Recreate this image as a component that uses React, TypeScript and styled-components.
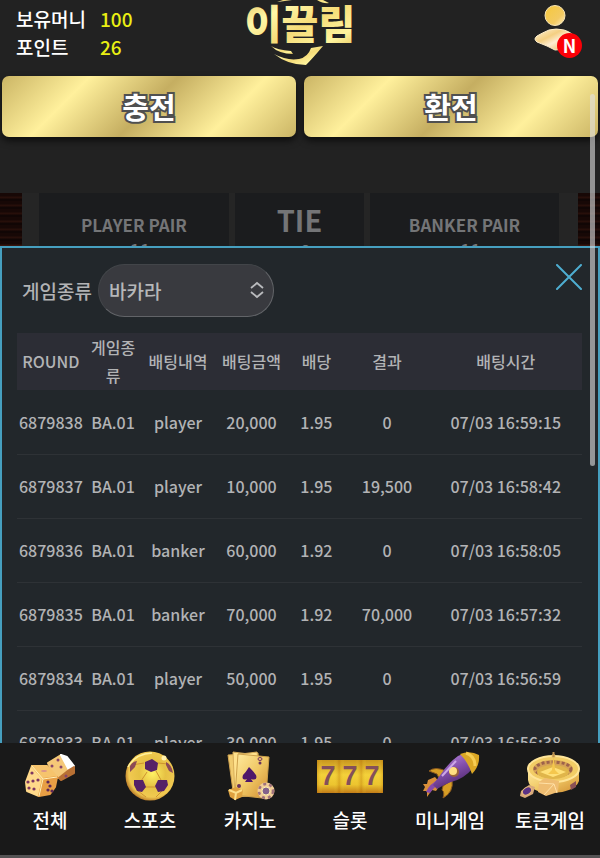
import React from "react";
import styled, { createGlobalStyle } from "styled-components";

const GlobalStyle = createGlobalStyle`
  *, *::before, *::after { box-sizing: border-box; }
  body {
    margin: 0;
    background: #222222;
    font-family: "Noto Sans CJK KR", "Noto Sans", sans-serif;
    font-weight: 500;
  }
  button, select { font-family: inherit; font-weight: inherit; }
`;

const Page = styled.div`
  position: relative;
  display: flex;
  flex-direction: column;
  height: 100vh;
  overflow: hidden;
  background: #222222;
`;

const Header = styled.header`
  display: grid;
  grid-template-columns: 1fr auto 1fr;
  align-items: start;
  height: 76px;
  flex: none;
`;

const Balance = styled.dl`
  display: grid;
  grid-template-columns: 84px 1fr;
  margin: 0;
  padding: 5px 0 0 16px;
  font-size: 19px;
  line-height: 28px;
  color: #ffffff;
  dt, dd { margin: 0; }
  dd { color: #e9ef13; }
`;

const LogoLink = styled.a`
  display: block;
  svg { display: block; }
`;

const ProfileButton = styled.button`
  position: relative;
  justify-self: end;
  margin: 4px 18px 0 0;
  padding: 0;
  border: 0;
  width: 48px;
  height: 54px;
  background: none;
  svg { display: block; }
`;

const NewBadge = styled.span`
  position: absolute;
  right: 0;
  top: 29px;
  width: 25px;
  height: 25px;
  border-radius: 50%;
  background: #fb0007;
  color: #ffffff;
  font-size: 18px;
  font-weight: 700;
  line-height: 24px;
  text-align: center;
`;

const WalletActions = styled.div`
  display: grid;
  grid-template-columns: 1fr 1fr;
  gap: 8px;
  padding: 0 2px;
  flex: none;
`;

const GoldButton = styled.button`
  height: 61px;
  border: 0;
  border-radius: 7px;
  padding: 0 0 2px;
  background: linear-gradient(135deg, #cbb565 0%, #fff09c 25%, #c5ae61 50%, #fff09c 75%, #cbb565 100%);
  box-shadow: 0 4px 7px rgba(0, 0, 0, 0.6);
  color: #ffffff;
  font-size: 29px;
  font-weight: 700;
  line-height: 40px;
  -webkit-text-stroke: 4px #505050;
  paint-order: stroke fill;
`;

const Board = styled.section`
  display: grid;
  grid-template-columns: 22px 1fr 22px;
  gap: 17px;
  height: 53px;
  margin-top: 56px;
  flex: none;
  overflow: hidden;
  background: #252525;
`;

const BoardBackdrop = styled.div`
  background:
    linear-gradient(180deg, transparent 74%, #481810 78%, #280e0a 84%, #53201a 88%, #1a0907 94%),
    repeating-linear-gradient(180deg, #170806 0 3px, #270f0a 4px 5px, #110605 6px 8px);
`;

const BetSpots = styled.div`
  display: grid;
  grid-template-columns: 190fr 129fr 189fr;
  gap: 6px;
  padding-right: 2px;
`;

const BetSpot = styled.div<{ $large?: boolean }>`
  display: flex;
  flex-direction: column;
  align-items: center;
  padding-top: ${(p) => (p.$large ? 7 : 19)}px;
  background: #1b1c1e;
  color: #747577;
  font-size: 18px;
  line-height: 24px;
  white-space: nowrap;
  strong {
    font-size: ${(p) => (p.$large ? 29 : 17)}px;
    font-weight: 700;
    line-height: ${(p) => (p.$large ? 38 : 25)}px;
  }
  span { padding-left: 12px; }
`;

const HistoryPanel = styled.section`
  flex: 1;
  min-height: 0;
  overflow: hidden;
  border: 2px solid #469fbf;
  border-bottom: 0;
  padding: 16px 16px 0 15px;
  background: #22272b;
  color: #b2b3b5;
`;

const PanelBar = styled.div`
  display: flex;
  align-items: flex-start;
  justify-content: space-between;
`;

const Filter = styled.div`
  display: flex;
  align-items: center;
  gap: 6px;
  padding-left: 5px;
  font-size: 19px;
  line-height: 28px;
`;

const SelectBox = styled.div`
  position: relative;
  svg {
    position: absolute;
    right: 10px;
    top: 16px;
    pointer-events: none;
  }
`;

const GameSelect = styled.select`
  appearance: none;
  display: block;
  width: 176px;
  height: 53px;
  padding: 0 36px 0 10px;
  border: 1px solid #424549;
  border-right-color: #626468;
  border-bottom-color: #626468;
  border-radius: 27px;
  background: #393a3f;
  color: #b6b7b9;
  font-size: 19px;
  line-height: 28px;
`;

const CloseButton = styled.button`
  padding: 0;
  border: 0;
  background: none;
  svg { display: block; }
`;

const BetTable = styled.table`
  width: 100%;
  margin-top: 16px;
  table-layout: fixed;
  border-collapse: collapse;
  font-size: 16px;
  line-height: 28px;
  text-align: center;
  th {
    height: 57px;
    padding: 0 5px 1px;
    background: #2c2d35;
    font-weight: 500;
    word-break: break-all;
  }
  td {
    height: 64px;
    padding: 0;
    border-bottom: 1px solid #2e3236;
    white-space: nowrap;
  }
`;

const BottomNav = styled.nav`
  display: grid;
  grid-template-columns: repeat(6, 1fr);
  flex: none;
  height: 115px;
  border-bottom: 3px solid #555354;
  background: #191919;
`;

const NavItem = styled.a`
  display: flex;
  flex-direction: column;
  align-items: center;
  gap: 3px;
  padding-top: 6px;
  color: #ffffff;
  font-size: 19px;
  line-height: 28px;
  text-decoration: none;
  white-space: nowrap;
`;

const ScrollThumb = styled.div`
  position: absolute;
  right: 5px;
  top: 94px;
  width: 5px;
  height: 372px;
  border-radius: 3px;
  background: rgba(225, 225, 225, 0.6);
`;

const Logo = () => (
  <svg width="112" height="70" viewBox="0 0 112 70" role="img" aria-label="이끌림">
    <defs>
      <linearGradient id="logoGold" x1="0" y1="0" x2="1" y2="1">
        <stop offset="0" stopColor="#e3b852" />
        <stop offset=".3" stopColor="#fff7a8" />
        <stop offset=".55" stopColor="#f6dc78" />
        <stop offset=".8" stopColor="#fff59e" />
        <stop offset="1" stopColor="#e2bd55" />
      </linearGradient>
    </defs>
    <path d="M33 2 39 0H48Q41 1 33 2ZM73 0H79L85 3Q80 4 73 0Z" fill="url(#logoGold)" />
    <path d="M27 46Q33 50 47 51L49 54Q35 54 27 46Z" fill="url(#logoGold)" />
    <path d="M30 54Q43 61 55 59Q64 57 67 48L79 46Q69 58 62 65Q44 65 30 54Z" fill="url(#logoGold)" />
    <text x="56" y="39" textAnchor="middle" fontSize="40" fontWeight="900" fill="url(#logoGold)">이끌림</text>
  </svg>
);

const ProfileIcon = () => (
  <svg width="48" height="54" viewBox="0 0 48 54" aria-hidden="true">
    <defs>
      <linearGradient id="profileHead" x1="0" y1="0" x2="1" y2="1">
        <stop stopColor="#f6c83b" /><stop offset=".65" stopColor="#f3ca62" /><stop offset="1" stopColor="#fff0ca" />
      </linearGradient>
      <linearGradient id="profileBody" x1="0" y1="0" x2="1" y2="1">
        <stop stopColor="#fff5da" /><stop offset=".35" stopColor="#f4cf82" /><stop offset=".55" stopColor="#ffedd2" /><stop offset="1" stopColor="#e4a32f" />
      </linearGradient>
    </defs>
    <circle cx="21" cy="11.500" r="10" fill="url(#profileHead)" stroke="#f8e6b7" />
    <path d="M15 26Q22 24 30 26Q40 29 42 36Q37 46 21 46Q14 42 3 38Q-1 35 3 32Q8 29 15 26Z" fill="url(#profileBody)" stroke="#ffefcc" />
  </svg>
);

const CloseIcon = () => (
  <svg width="26" height="26" viewBox="0 0 26 26" aria-hidden="true">
    <path d="M1 1 25 25M25 1 1 25" stroke="#4eaed1" strokeWidth="2" strokeLinecap="round" />
  </svg>
);

const SelectArrows = () => (
  <svg width="14" height="20" viewBox="0 0 14 20" fill="none" aria-hidden="true">
    <path d="M1 8 7 3 13 8M1 12 7 17 13 12" stroke="#b9babd" strokeWidth="1.8" />
  </svg>
);

const NavSvg = ({ children }: { children: React.ReactNode }) => (
  <svg width="70" height="54" viewBox="0 0 70 54" aria-hidden="true">{children}</svg>
);

const GoldDefs = ({ id }: { id: string }) => (
  <defs>
    <linearGradient id={id} x1="0" y1="0" x2="1" y2="1">
      <stop stopColor="#ffeba0" /><stop offset=".5" stopColor="#f0c865" /><stop offset="1" stopColor="#d08c30" />
    </linearGradient>
  </defs>
);

const DiceIcon = () => (
  <NavSvg>
    <g strokeLinejoin="round" strokeWidth="2">
      <path d="M33 14 46 6 54 21 44 29 40 28Z" fill="#f5c878" stroke="#f5c878" />
      <path d="M46 6 52 8 59 17 54 21Z" fill="#ffffff" stroke="#ffffff" />
      <path d="M44 29 54 21 59 18V24L46 31Z" fill="#b87034" stroke="#b87034" />
      <path d="M17 17 11 33 12 42 24 47 28 30Z" fill="#ffd98a" stroke="#ffd98a" />
      <path d="M17 17 32 17 42 28 28 30Z" fill="#f6c46d" stroke="#f6c46d" />
      <path d="M28 30 42 28 40 38 35 45 24 47Z" fill="#e89f45" stroke="#e89f45" />
    </g>
    <path d="M17 17 28 30 24 47M28 30 42 28" stroke="#fff0b8" fill="none" />
    <g fill="#7d3661">
      <circle cx="17" cy="24" r="1.600" />
      <circle cx="23" cy="31" r="1.600" />
      <circle cx="13" cy="33" r="1.600" />
      <circle cx="18" cy="32" r="1.600" />
      <circle cx="14" cy="39" r="1.600" />
      <circle cx="19" cy="40" r="1.600" />
    </g>
    <g fill="#5e2856">
      <circle cx="33" cy="33" r="1.600" />
      <circle cx="35" cy="37" r="1.600" />
      <circle cx="33" cy="41" r="1.600" />
      <circle cx="37" cy="42" r="1.600" />
    </g>
    <g fill="#88456a">
      <ellipse cx="29" cy="22" rx="3" ry="1" fill="#d9928b" />
      <circle cx="37" cy="17" r="1.500" />
      <circle cx="43" cy="11" r="1.500" />
      <circle cx="46" cy="18" r="1.500" />
      <circle cx="51" cy="27" r="1.500" />
    </g>
  </NavSvg>
);

const BallIcon = () => (
  <NavSvg>
    <defs>
      <radialGradient id="ballGold" cx=".55" cy=".45" r=".6">
        <stop stopColor="#fff163" /><stop offset=".45" stopColor="#e6c144" /><stop offset=".8" stopColor="#f1c951" /><stop offset="1" stopColor="#a7611c" />
      </radialGradient>
    </defs>
    <circle cx="35" cy="27" r="24.500" fill="url(#ballGold)" />
    <path d="M29 14 17 16M43 14 53 15M32 23 26 32M41 22 46 31M23 42 31 48M47 42 41 48M29 38H43" stroke="#cf9330" strokeWidth="1" />
    <path d="M30 13 37 10 43 14 42 21 36 23 30 20ZM19 31 28 31 31 38 27 43 22 42 19 36ZM43 31 52 31 53 36 49 42 43 43 40 37Z" fill="#562267" />
    <path d="M15 17Q18 12 22 12L20 18 15 23ZM51 13Q57 16 58 24L54 22 51 16Z" fill="#8c4b55" />
    <path d="M13 18Q20 5 37 4" stroke="#fff19a" strokeWidth="1.500" fill="none" />
    <circle cx="49" cy="9" r="2.500" fill="#fff0ad" />
  </NavSvg>
);

const CardsIcon = () => (
  <NavSvg>
    <GoldDefs id="cardGold" />
    <path d="M13 6 43 4 45 42 19 49Z" fill="#f1cc70" stroke="#d3a551" />
    <path d="M18 3Q30 6 42 3L48 46 20 48Z" fill="#ffe28d" stroke="#d8ae5a" />
    <path d="M23 5 54 8 51 46 47 49 20 46Z" fill="url(#cardGold)" stroke="#cda04c" />
    <path d="M34 18Q39 23 41 26Q43 32 36 30L38 33H30L32 30Q26 32 28 26Q31 23 34 18Z" fill="#4e176a" />
    <ellipse cx="45" cy="10" rx="2" ry="1.500" fill="none" stroke="#76345f" />
    <circle cx="45" cy="14" r="1.500" fill="#68325c" />
    <circle cx="24" cy="37" r="2" fill="#68325c" />
    <path d="M13 41 21 38 28 41 27 48 20 51 15 48Z" fill="#dea13f" />
    <path d="m14 41 7 3 6-3M21 44l-1 7" stroke="#fce08b" strokeWidth="2" fill="none" />
    <circle cx="51" cy="42" r="8.500" fill="#f2ce98" />
    <circle cx="51" cy="42" r="7" fill="none" stroke="#a0727c" strokeWidth="2.500" strokeDasharray="3 3" />
    <circle cx="51" cy="42" r="4" fill="#84628c" stroke="#fff0ae" />
  </NavSvg>
);

const SlotText = styled.text`
  font-family: "Liberation Sans", sans-serif;
  font-size: 27px;
  font-weight: 700;
`;

const SlotsIcon = () => (
  <NavSvg>
    <defs>
      <linearGradient id="slotGold" x2="0" y2="1">
        <stop stopColor="#c9961f" /><stop offset=".45" stopColor="#f4d13a" /><stop offset=".75" stopColor="#ecc42f" /><stop offset="1" stopColor="#c27c18" />
      </linearGradient>
      <linearGradient id="slotShade">
        <stop stopColor="#b06500" stopOpacity=".35" /><stop offset=".25" stopColor="#ffee45" stopOpacity="0" /><stop offset=".75" stopColor="#ffee45" stopOpacity="0" /><stop offset="1" stopColor="#b06500" stopOpacity=".3" />
      </linearGradient>
    </defs>
    {[2, 24, 46].map((x) => (
      <g key={x}>
        <rect x={x} y="11" width="22" height="33" fill="url(#slotGold)" />
        <rect x={x} y="11" width="22" height="33" fill="url(#slotShade)" />
        <SlotText x={x + 11} y="36" textAnchor="middle" fill="#84505a">7</SlotText>
      </g>
    ))}
  </NavSvg>
);

const RocketIcon = () => (
  <NavSvg>
    <defs>
      <linearGradient id="rocketPurple" x1=".2" y1="0" x2=".7" y2="1">
        <stop stopColor="#b98add" /><stop offset=".45" stopColor="#8450ad" /><stop offset="1" stopColor="#452060" />
      </linearGradient>
    </defs>
    <path d="M14 22Q20 17 31 22L25 31 22 25ZM28 37 37 31Q39 43 28 49 30 43 27 41Z" fill="#d79e25" stroke="#8a581e" />
    <path d="M13 31 20 28 26 35 21 42 17 41 12 48 12 42 8 42 10 38 8 35 12 35Z" fill="#d98f3a" />
    <path d="M11 43Q14 35 26 29L30 34Q20 36 15 44Z" fill="#874aaa" />
    <path d="M23 29Q33 14 43 7Q50 3 59 6L58 19Q49 30 36 33Q28 36 22 40L18 36Z" fill="url(#rocketPurple)" />
    <path d="M45 5Q55 1 64 6Q65 17 57 25Q53 13 45 5Z" fill="#dba725" />
    <path d="M51 4Q60 7 60 17" stroke="#f6cc52" strokeWidth="3" fill="none" />
    <circle cx="39" cy="23" r="5" fill="#9d6537" /><circle cx="38" cy="22" r="4" fill="#ffdf82" />
    <path d="M27 27 41 12" stroke="#cca7e7" strokeWidth="2" />
  </NavSvg>
);

const RouletteIcon = () => (
  <NavSvg>
    <GoldDefs id="rouletteGold" />
    <path d="M13 20V31Q15 44 37 44Q60 43 64 32V21Z" fill="url(#rouletteGold)" />
    <ellipse cx="38.500" cy="20" rx="25.500" ry="13" fill="#f2cc65" stroke="#ffe599" strokeWidth="2" />
    <ellipse cx="38" cy="20" rx="20" ry="9" fill="#d5a257" />
    <ellipse cx="38" cy="20" rx="18" ry="7" fill="none" stroke="#9d624b" strokeWidth="3" strokeDasharray="3 2" />
    <ellipse cx="38" cy="23" rx="16" ry="7" fill="#e0b54a" />
    <path d="M25 23 38 18 51 23 38 28Z" fill="#ffe079" />
    <path d="M37 21 38 9H39L40 21 44 25H33Z" fill="#f5c74d" />
    <circle cx="38.500" cy="7" r="2" fill="#e3bb62" /><path d="M38.500 3V8" stroke="#bc9151" strokeWidth="2" />
    <path d="M24 33 30 29 44 32 43 43 31 47 23 43Z" fill="#efbd72" />
    <path d="M24 34 39 35 42 44M29 46 39 35" stroke="#ffe0a6" fill="none" />
    <path d="M6 42 14 36 20 38 18 45 10 49 5 47Z" fill="#d8a97b" />
    <ellipse cx="12" cy="42" rx="5" ry="3.500" transform="rotate(-35 12 42)" fill="#5b3286" stroke="#e8bd7c" />
    <path d="M55 36 61 32V38L56 41Z" fill="#8a5055" />
  </NavSvg>
);

const columns = [
  { label: "ROUND", width: "12%" },
  { label: "게임종류", width: "10%" },
  { label: "배팅내역", width: "13%" },
  { label: "배팅금액", width: "13%" },
  { label: "배당", width: "10%" },
  { label: "결과", width: "15%" },
  { label: "배팅시간", width: "27%" },
];

const bets = [
  ["6879838", "BA.01", "player", "20,000", "1.95", "0", "07/03 16:59:15"],
  ["6879837", "BA.01", "player", "10,000", "1.95", "19,500", "07/03 16:58:42"],
  ["6879836", "BA.01", "banker", "60,000", "1.92", "0", "07/03 16:58:05"],
  ["6879835", "BA.01", "banker", "70,000", "1.92", "70,000", "07/03 16:57:32"],
  ["6879834", "BA.01", "player", "50,000", "1.95", "0", "07/03 16:56:59"],
  ["6879833", "BA.01", "player", "30,000", "1.95", "0", "07/03 16:56:38"],
];

const navItems = [
  { label: "전체", href: "#all", Icon: DiceIcon },
  { label: "스포츠", href: "#sports", Icon: BallIcon },
  { label: "카지노", href: "#casino", Icon: CardsIcon },
  { label: "슬롯", href: "#slots", Icon: SlotsIcon },
  { label: "미니게임", href: "#mini", Icon: RocketIcon },
  { label: "토큰게임", href: "#token", Icon: RouletteIcon },
];

const HeadCell = styled.th<{ $width: string }>`
  width: ${(p) => p.$width};
`;

export default function App() {
  return (
    <Page>
      <GlobalStyle />
      <Header>
        <Balance>
          <dt>보유머니</dt>
          <dd>100</dd>
          <dt>포인트</dt>
          <dd>26</dd>
        </Balance>
        <LogoLink href="#home"><Logo /></LogoLink>
        <ProfileButton type="button" aria-label="내 정보">
          <ProfileIcon />
          <NewBadge>N</NewBadge>
        </ProfileButton>
      </Header>
      <WalletActions>
        <GoldButton type="button">충전</GoldButton>
        <GoldButton type="button">환전</GoldButton>
      </WalletActions>
      <Board>
        <BoardBackdrop />
        <BetSpots>
          <BetSpot><strong>PLAYER PAIR</strong><span>11</span></BetSpot>
          <BetSpot $large><strong>TIE</strong><span>8</span></BetSpot>
          <BetSpot><strong>BANKER PAIR</strong><span>11</span></BetSpot>
        </BetSpots>
        <BoardBackdrop />
      </Board>
      <HistoryPanel>
        <PanelBar>
          <Filter>
            <label htmlFor="game-type">게임종류</label>
            <SelectBox>
              <GameSelect id="game-type" defaultValue="baccarat">
                <option value="baccarat">바카라</option>
              </GameSelect>
              <SelectArrows />
            </SelectBox>
          </Filter>
          <CloseButton type="button" aria-label="닫기"><CloseIcon /></CloseButton>
        </PanelBar>
        <BetTable>
          <thead>
            <tr>
              {columns.map((c) => (
                <HeadCell key={c.label} $width={c.width} scope="col">{c.label}</HeadCell>
              ))}
            </tr>
          </thead>
          <tbody>
            {bets.map((row) => (
              <tr key={row[0]}>
                {row.map((cell, i) => <td key={i}>{cell}</td>)}
              </tr>
            ))}
          </tbody>
        </BetTable>
      </HistoryPanel>
      <BottomNav>
        {navItems.map(({ label, href, Icon }) => (
          <NavItem key={label} href={href}>
            <Icon />
            {label}
          </NavItem>
        ))}
      </BottomNav>
      <ScrollThumb />
    </Page>
  );
}
